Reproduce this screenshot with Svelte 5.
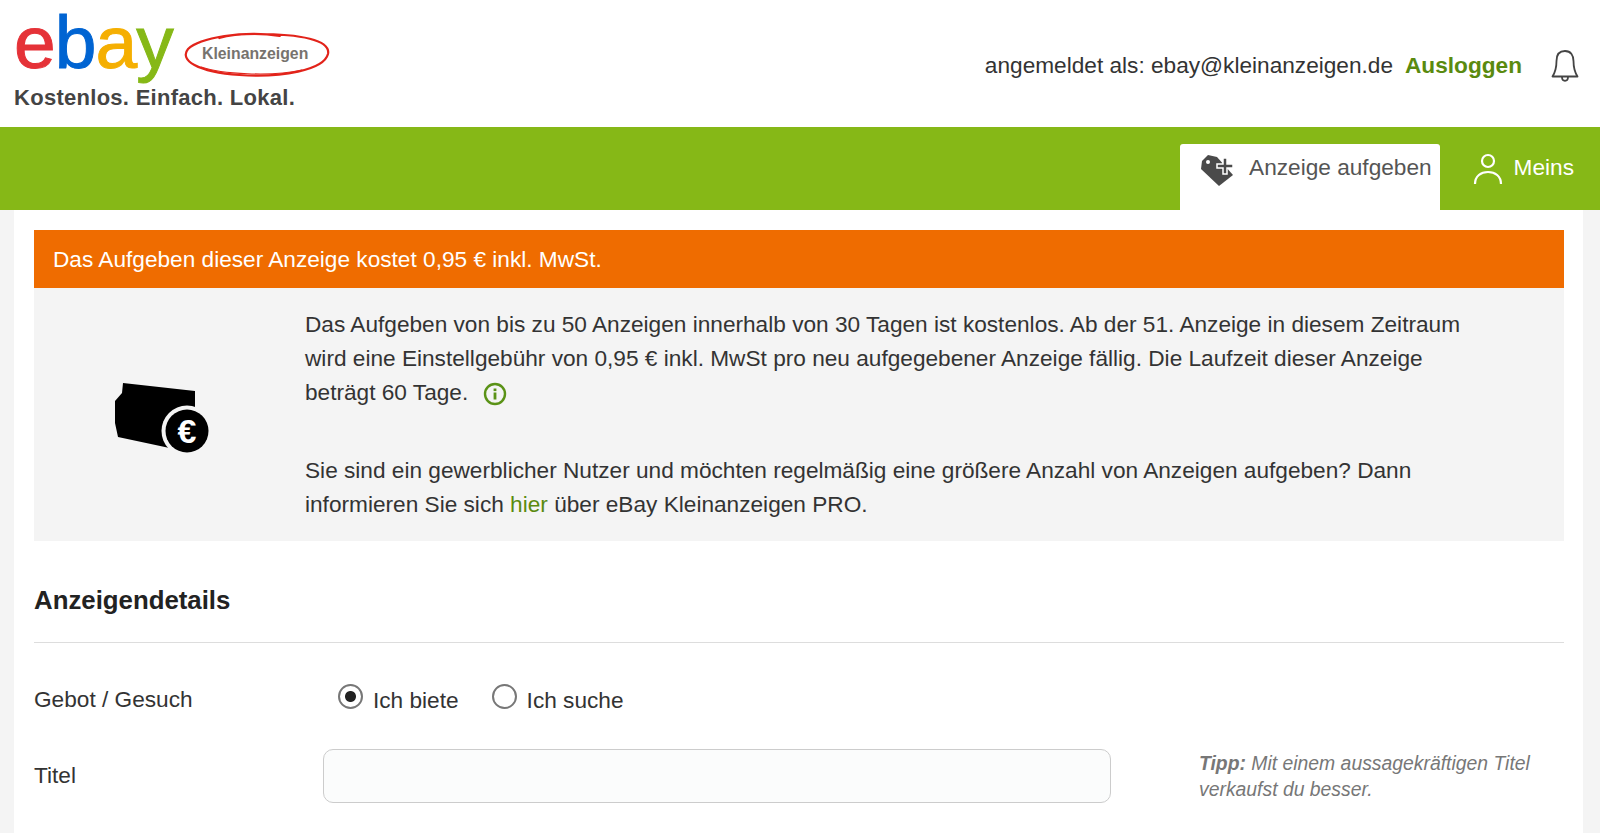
<script lang="ts">
  let gebot = $state('biete');
</script>

<div class="page">
  <header class="kopf">
    <div class="marke">
      <div class="logo">
        <span class="ebay"><span class="e">e</span><span class="b">b</span><span class="a">a</span><span class="y">y</span></span>
        <span class="oval">
          <svg width="149" height="48" viewBox="0 0 148 48" preserveAspectRatio="none" fill="none" stroke="#e2231a" stroke-linecap="round">
            <path d="M98 6C62 0 18 8 7 19C-2 30 16 42 58 45C100 48 142 40 146 24C149 10 118 4 76 4C60 4 48 5 38 8" stroke-width="2.200"/>
            <path d="M20 37C40 44 90 47 120 40" stroke-width="1.200"/>
          </svg>
          <span class="klein">Kleinanzeigen</span>
        </span>
      </div>
      <div class="slogan">Kostenlos. Einfach. Lokal.</div>
    </div>
    <div class="konto">
      <span>angemeldet als: ebay@kleinanzeigen.de</span>
      <a href="#logout" class="aus">Ausloggen</a>
      <svg class="glocke" width="30" height="34" viewBox="0 0 30 34" fill="none" stroke="#444" stroke-width="1.8" stroke-linejoin="round">
        <path d="M15 2C9 2 6.500 6.500 6.500 12C6.500 18 6 22 2.500 27.500H27.500C24 22 23.500 18 23.500 12C23.500 6.500 21 2 15 2Z"/>
        <path d="M12 28C12 33 18 33 18 28"/>
      </svg>
    </div>
  </header>

  <nav class="leiste">
    <a href="#neu" class="tab aktiv">
      <svg width="32" height="32" viewBox="0 0 32 32">
        <path d="M1 6L7 0L16 2L32 20L18 31L0 14Z" fill="#4a4a4a"/>
        <circle cx="7" cy="7" r="2" fill="#fff"/>
        <path d="M22 3H26V9H32V13H26V19H22V13H16V9H22Z" fill="#4a4a4a" stroke="#fff" stroke-width="1.500"/>
      </svg>
      <span>Anzeige aufgeben</span>
    </a>
    <a href="#meins" class="tab">
      <svg width="32" height="36" viewBox="0 0 32 36" fill="none" stroke="#fff" stroke-width="2.200">
        <circle cx="16" cy="10" r="6"/>
        <path d="M3 33C3 25 9 21 16 21C23 21 29 25 29 33"/>
      </svg>
      <span>Meins</span>
    </a>
  </nav>

  <main class="inhalt">
    <div class="hinweis">Das Aufgeben dieser Anzeige kostet 0,95 € inkl. MwSt.</div>
    <section class="info">
      <div class="bild">
        <svg width="98" height="74" viewBox="0 0 98 74">
          <path d="M8 0L80 8V26L78 70L3 54L0 40V18L7 10Z" fill="#000"/>
          <circle cx="72" cy="48" r="25.500" fill="#f4f4f4"/>
          <circle cx="72" cy="48" r="21.500" fill="#000"/>
          <text x="72" y="60" text-anchor="middle" class="euro">€</text>
        </svg>
      </div>
      <div class="text">
        <p>Das Aufgeben von bis zu 50 Anzeigen innerhalb von 30 Tagen ist kostenlos. Ab der 51. Anzeige in diesem Zeitraum wird eine Einstellgebühr von 0,95 € inkl. MwSt pro neu aufgegebener Anzeige fällig. Die Laufzeit dieser Anzeige beträgt 60 Tage.
          <svg class="i" width="24" height="24" viewBox="0 0 24 24" fill="none">
            <circle cx="12" cy="12" r="10" stroke="#5a9216" stroke-width="2.400"/>
            <rect x="10.600" y="10.500" width="2.800" height="7" fill="#5a9216"/>
            <rect x="10.600" y="6.500" width="2.800" height="2.600" fill="#5a9216"/>
          </svg>
        </p>
        <p>Sie sind ein gewerblicher Nutzer und möchten regelmäßig eine größere Anzahl von Anzeigen aufgeben? Dann informieren Sie sich <a href="#pro">hier</a> über eBay Kleinanzeigen PRO.</p>
      </div>
    </section>

    <h2>Anzeigendetails</h2>

    <div class="zeile gebot">
      <span class="name">Gebot / Gesuch</span>
      <div class="wahl">
        <label><input type="radio" bind:group={gebot} value="biete" /><span>Ich biete</span></label>
        <label><input type="radio" bind:group={gebot} value="suche" /><span>Ich suche</span></label>
      </div>
    </div>

    <div class="zeile titel">
      <span class="name">Titel</span>
      <input class="feld" type="text" />
      <p class="tipp"><b>Tipp:</b> Mit einem aussagekräftigen Titel verkaufst du besser.</p>
    </div>
  </main>
</div>

<style>
  :global(body) {
    margin: 0;
    background: #f4f4f4;
    overflow: hidden;
  }
  .page {
    height: 833px;
    overflow: hidden;
    font-family: 'Liberation Sans', Arial, sans-serif;
    color: #333;
    font-size: 22.650px;
  }
  a {
    text-decoration: none;
  }
  .kopf {
    height: 127px;
    box-sizing: border-box;
    background: #fff;
    display: flex;
    justify-content: space-between;
    padding: 0 20px 0 14px;
  }
  .logo {
    display: flex;
    align-items: center;
    height: 84px;
    box-sizing: border-box;
    padding-top: 1px;
  }
  .ebay {
    font-size: 75px;
    line-height: 83px;
    letter-spacing: -1px;
    -webkit-text-stroke: 1px;
    margin-right: 8px;
  }
  .e {
    color: #e53238;
  }
  .b {
    color: #0064d2;
  }
  .a {
    color: #f5af02;
  }
  .y {
    color: #86b817;
  }
  .oval {
    display: flex;
    align-items: center;
    justify-content: center;
    width: 149px;
    height: 48px;
    position: relative;
    top: 11px;
  }
  .oval svg {
    position: absolute;
    left: 0;
    top: 0;
  }
  .klein {
    font-weight: 700;
    font-size: 17px;
    color: #77736e;
    transform: scaleX(0.93);
  }
  .slogan {
    font-size: 22px;
    font-weight: 700;
    letter-spacing: 0.280px;
    line-height: 28px;
    color: #444;
  }
  .konto {
    display: flex;
    align-items: center;
    height: 130px;
  }
  .aus {
    font-weight: 700;
    color: #5a8a0f;
    margin-left: 12px;
  }
  .glocke {
    margin-left: 28px;
    margin-top: 2px;
  }
  .leiste {
    height: 83px;
    background: #86b817;
    display: flex;
    justify-content: flex-end;
    align-items: flex-end;
  }
  .tab {
    height: 66px;
    box-sizing: border-box;
    display: flex;
    align-items: flex-start;
    gap: 10px;
    color: #fff;
  }
  .tab span {
    padding-top: 3px;
  }
  .aktiv {
    background: #fff;
    border-radius: 3px 3px 0 0;
    padding: 10px 8px 0 21px;
    margin-right: 32px;
    gap: 16px;
  }
  .aktiv svg {
    margin-top: 1px;
  }
  .aktiv span {
    color: #555;
    padding-top: 0;
  }
  .tab:not(.aktiv) {
    padding: 7px 26px 0 0;
  }
  .inhalt {
    margin: 0 17px 0 14px;
    background: #fff;
    padding: 20px 19px 0 20px;
    height: 623px;
    box-sizing: border-box;
  }
  .hinweis {
    background: #ef6c00;
    color: #fff;
    height: 58px;
    line-height: 59px;
    padding-left: 19px;
  }
  .info {
    background: #f4f4f4;
    display: flex;
    height: 253px;
    padding-top: 19px;
    box-sizing: border-box;
  }
  .bild {
    width: 271px;
    flex: none;
    box-sizing: border-box;
    padding: 76px 0 0 81px;
  }
  .euro {
    fill: #fff;
    font-family: 'Liberation Sans', Arial, sans-serif;
    font-weight: 700;
    font-size: 34px;
  }
  .text {
    width: 1180px;
    line-height: 34px;
  }
  .text p {
    margin: 0 0 44px;
  }
  .text a {
    color: #5a8a0f;
  }
  .i {
    vertical-align: -6px;
    margin-left: 8px;
  }
  h2 {
    margin: 0;
    padding: 41px 0 24px;
    font-size: 25.800px;
    line-height: 36px;
    color: #222;
    border-bottom: 1px solid #ddd;
  }
  .zeile {
    display: flex;
  }
  .name {
    width: 289px;
    flex: none;
  }
  .gebot {
    padding-top: 40px;
    height: 66px;
    box-sizing: content-box;
    align-items: flex-start;
    line-height: 32px;
  }
  .wahl {
    display: flex;
    gap: 33px;
    padding-left: 15px;
  }
  .wahl label {
    display: flex;
    gap: 10px;
  }
  .wahl span {
    padding-top: 1px;
  }
  .wahl input {
    appearance: none;
    width: 25px;
    height: 25px;
    margin: 1px 0 0;
    border: 2px solid #777;
    border-radius: 50%;
    background: #fff;
    box-sizing: border-box;
  }
  .wahl input:checked {
    background: radial-gradient(circle, #222 0 5px, #fff 6px);
  }
  .titel {
    align-items: center;
    height: 54px;
  }
  .titel .name {
    padding-bottom: 2px;
  }
  .feld {
    width: 788px;
    height: 54px;
    box-sizing: border-box;
    border: 1px solid #ccc;
    border-radius: 10px;
    background: #fbfcfc;
    flex: none;
  }
  .tipp {
    margin: 0 0 0 88px;
    font-size: 19.360px;
    line-height: 26px;
    font-style: italic;
    color: #777;
    width: 350px;
  }
</style>
